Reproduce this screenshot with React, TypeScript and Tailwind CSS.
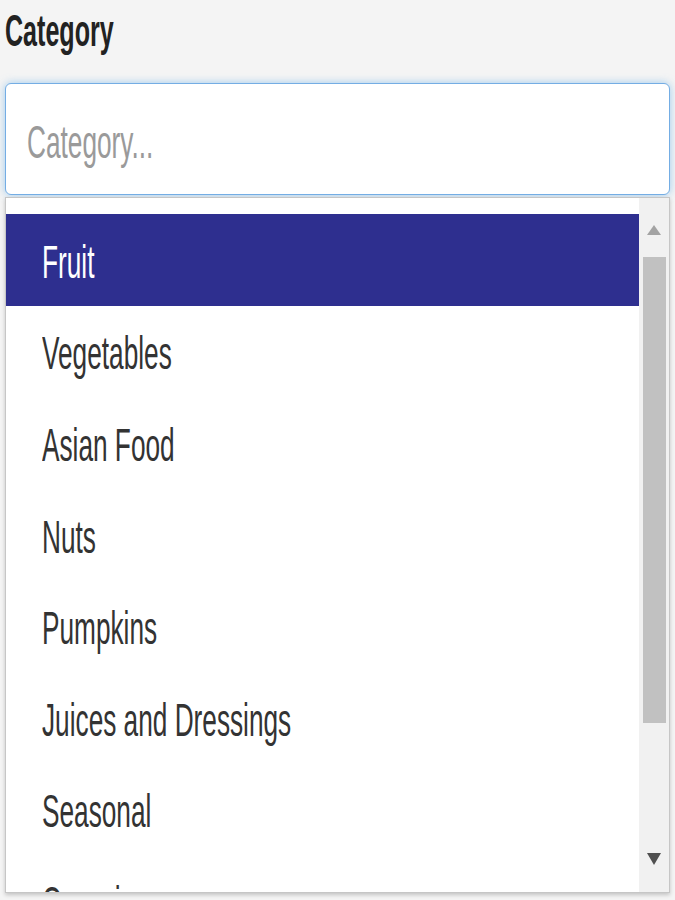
import React from 'react';

const categories = [
  'Fruit',
  'Vegetables',
  'Asian Food',
  'Nuts',
  'Pumpkins',
  'Juices and Dressings',
  'Seasonal',
  'Organics',
];

// Text in the shot is squeezed sideways, so every label is drawn tall and narrowed.
const Squeezed: React.FC<{ children: React.ReactNode; className?: string }> = ({ children, className = '' }) => (
  <span className={`inline-block origin-left scale-x-[0.57] whitespace-nowrap ${className}`}>{children}</span>
);

export default function App() {
  const selected = 'Fruit';

  return (
    <div
      className="w-[675px] h-[900px] bg-[#f4f4f4] overflow-hidden"
      style={{ fontFamily: '"Liberation Sans", Arial, sans-serif' }}
    >
      <div className="px-[5px] pt-[9px]">
        <label className="block h-[44px] text-[44px] leading-none font-bold text-[#222]">
          <Squeezed>Category</Squeezed>
        </label>

        <div className="mt-[30px] h-[112px] rounded-[6px] border border-[#74ade4] bg-white shadow-[0_0_9px_rgba(102,175,233,0.6)] flex items-center pl-[21px] pt-[6px]">
          <span className="text-[46px] leading-none text-[#9a9a9a]">
            <Squeezed>Category...</Squeezed>
          </span>
        </div>

        <div className="mt-[2px] h-[696px] border border-[#c6c6c6] bg-white shadow-[0_2px_4px_rgba(0,0,0,0.2)] flex">
          <ul className="flex-1 pt-[16px] overflow-hidden">
            {categories.map((c) => (
              <li
                key={c}
                className={`h-[91.6px] flex items-center pl-[36px] pt-[4px] text-[46px] leading-none ${
                  c === selected ? 'bg-[#2e2f8f] text-white' : 'text-[#333]'
                }`}
              >
                <Squeezed>{c}</Squeezed>
              </li>
            ))}
          </ul>

          <div className="w-[30px] bg-[#f1f1f1] flex flex-col items-center pt-[17px]">
            <div className="h-[30px] flex items-center justify-center">
              <svg width="14" height="10" viewBox="0 0 14 10">
                <path d="M7 0 L14 10 L0 10 Z" fill="#a3a3a3" />
              </svg>
            </div>
            <div className="mt-[12px] w-[23px] h-[466px] bg-[#c1c1c1]" />
            <div className="flex-1" />
            <div className="h-[30px] flex items-center justify-center mb-[18px]">
              <svg width="14" height="12" viewBox="0 0 14 12">
                <path d="M0 0 L14 0 L7 12 Z" fill="#505050" />
              </svg>
            </div>
          </div>
        </div>
      </div>
    </div>
  );
}
